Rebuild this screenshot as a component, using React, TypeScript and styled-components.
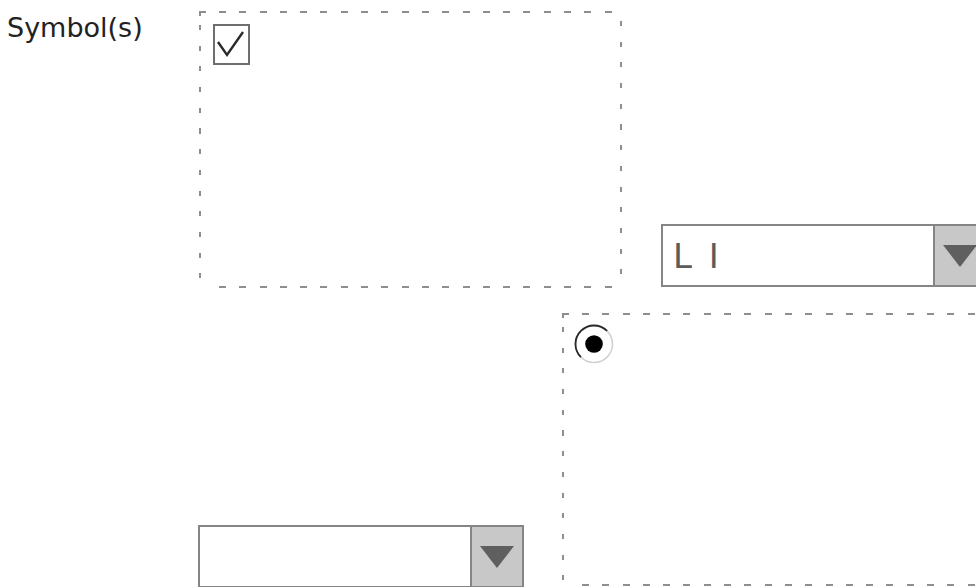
import React from "react";
import styled, { createGlobalStyle } from "styled-components";

const Global = createGlobalStyle`
  html, body { margin: 0; padding: 0; background: #ffffff; }
  body { font-family: "DejaVu Sans", Verdana, sans-serif; }
`;

/* Form-designer surface: controls sit at their design coordinates on a free canvas. */
const Canvas = styled.div`
  position: relative;
  width: 976px;
  height: 587px;
  box-sizing: border-box;
  padding: 12px 0 0 7px;
  overflow: hidden;
  background: #ffffff;
`;

type Pos = { $x: number; $y: number };

const Label = styled.div`
  font-family: "DejaVu Sans", Verdana, sans-serif;
  font-size: 27px;
  line-height: 32px;
  color: #222;
  white-space: nowrap;
`;

const DASH = "#8e8e8e";

const GroupBox = styled.div<Pos & { $w: number; $h: number; $pad: string }>`
  position: absolute;
  left: ${(p) => p.$x}px;
  top: ${(p) => p.$y}px;
  width: ${(p) => p.$w}px;
  height: ${(p) => p.$h}px;
  box-sizing: border-box;
  padding: ${(p) => p.$pad};
  display: flex;
  align-items: flex-start;
  background-image:
    repeating-linear-gradient(to right, ${DASH} 0 7px, transparent 7px 20.3px),
    repeating-linear-gradient(to right, ${DASH} 0 7px, transparent 7px 20.3px),
    repeating-linear-gradient(to bottom, ${DASH} 0 5px, transparent 5px 20.7px),
    repeating-linear-gradient(to bottom, ${DASH} 0 5px, transparent 5px 20.7px),
    linear-gradient(${DASH}, ${DASH}),
    linear-gradient(${DASH}, ${DASH});
  background-size:
    calc(100% - 20px) 2px,
    calc(100% - 20px) 2px,
    2px calc(100% - 14px),
    2px calc(100% - 14px),
    7px 2px,
    2px 5px;
  background-position:
    20px 0,
    20px calc(100% - 1px),
    0 14px,
    100% 10px,
    0 0,
    0 0;
  background-repeat: no-repeat;
`;

const CheckBox = styled.span`
  width: 37px;
  height: 41px;
  box-sizing: border-box;
  border: 2px solid #6e6e6e;
  background: #fff;
  display: flex;
  align-items: center;
  justify-content: center;
`;

const Radio = styled.span`
  width: 40px;
  height: 40px;
  display: block;
`;

const Select = styled.div<Pos & { $w: number }>`
  position: absolute;
  left: ${(p) => p.$x}px;
  top: ${(p) => p.$y}px;
  width: ${(p) => p.$w}px;
  height: 63px;
  box-sizing: border-box;
  border: 2px solid #858585;
  background: #fff;
  display: flex;
  align-items: stretch;
`;

const SelectValue = styled.div`
  flex: 1;
  display: flex;
  align-items: center;
  padding-left: 10px;
  font-family: "DejaVu Sans", Verdana, sans-serif;
  font-size: 34px;
  color: #5c5c5c;
  letter-spacing: 3px;
  white-space: pre;
`;

const SelectButton = styled.div`
  width: 50px;
  flex: none;
  border-left: 2px solid #858585;
  background: #c8c8c8;
  display: flex;
  align-items: center;
  justify-content: center;
`;

const Arrow = () => (
  <svg width="34" height="22" viewBox="0 0 34 22">
    <polygon points="0,0 34,0 17,22" fill="#5f5f5f" />
  </svg>
);

export default function App() {
  return (
    <>
      <Global />
      <Canvas>
        <Label>Symbol(s)</Label>

        <GroupBox $x={199} $y={11} $w={423} $h={278} $pad="13px 0 0 14px">
          <CheckBox>
            <svg width="33" height="37" viewBox="0 0 33 37" style={{ display: "block" }}>
              <polyline points="3,16 12,29 28,6" fill="none" stroke="#2a2a2a" strokeWidth="2.4" />
            </svg>
          </CheckBox>
        </GroupBox>

        <Select $x={661} $y={224} $w={326}>
          <SelectValue>L I</SelectValue>
          <SelectButton>
            <Arrow />
          </SelectButton>
        </Select>

        <GroupBox $x={562} $y={313} $w={520} $h={274} $pad="11px 0 0 12px">
          <Radio>
            <svg width="40" height="40" viewBox="0 0 40 40">
              <circle cx="20" cy="20" r="18.5" fill="#fff" stroke="#d2d2d2" strokeWidth="1.6" />
              <path d="M 6.9 33.1 A 18.5 18.5 0 0 1 33.1 6.9" fill="none" stroke="#2a2a2a" strokeWidth="1.8" />
              <circle cx="20" cy="20" r="8.8" fill="#000" />
            </svg>
          </Radio>
        </GroupBox>

        <Select $x={198} $y={525} $w={326}>
          <SelectValue />
          <SelectButton>
            <Arrow />
          </SelectButton>
        </Select>
      </Canvas>
    </>
  );
}
